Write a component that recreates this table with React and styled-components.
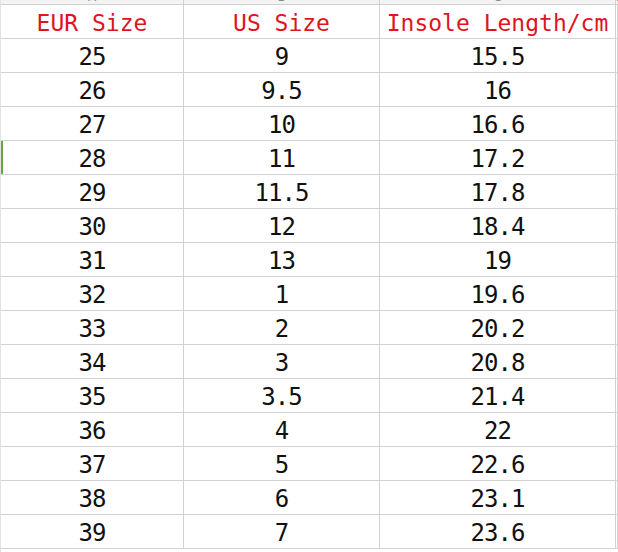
import React from "react";
import styled, { createGlobalStyle } from "styled-components";

const GlobalStyle = createGlobalStyle`
  html, body {
    margin: 0;
    padding: 0;
    background: #fff;
  }
`;

const Sheet = styled.div`
  width: 618px;
  height: 552px;
  overflow: hidden;
  background: #fff;
  border-left: 1px solid #e2e2e2;
  box-sizing: border-box;
`;

const columns = "183px 196px 236px 1fr";

const ColumnHeads = styled.div`
  display: grid;
  grid-template-columns: ${columns};
  height: 4px;
  overflow: hidden;
  background: #f3f3f3;
  border-bottom: 1px solid #cfcfcf;
`;

const ColumnHead = styled.div`
  text-align: center;
  font-family: "DejaVu Sans", sans-serif;
  font-size: 12px;
  line-height: 12px;
  margin-top: -9px;
  color: #8a8a8a;
  border-right: 1px solid #cfcfcf;
`;

const Grid = styled.div`
  display: grid;
  grid-template-columns: ${columns};
  grid-auto-rows: 34px;
`;

const Cell = styled.div`
  box-sizing: border-box;
  border-right: 1px solid #d2d2d2;
  border-bottom: 1px solid #d2d2d2;
  text-align: center;
  white-space: nowrap;
  font-family: "DejaVu Sans Mono", "Liberation Mono", monospace;
  color: ${({ $head }) => ($head ? "#e0141e" : "#111")};
  font-size: ${({ $head }) => ($head ? "23px" : "24px")};
  letter-spacing: ${({ $head }) => ($head ? "0" : "-1px")};
  padding-top: ${({ $head }) => ($head ? "4px" : "3px")};
  line-height: ${({ $head }) => ($head ? "29px" : "30px")};
  box-shadow: ${({ $marked }) => ($marked ? "inset 2px 0 0 #62a83c" : "none")};
`;

const rows = [
  ["25", "9", "15.5"],
  ["26", "9.5", "16"],
  ["27", "10", "16.6"],
  ["28", "11", "17.2"],
  ["29", "11.5", "17.8"],
  ["30", "12", "18.4"],
  ["31", "13", "19"],
  ["32", "1", "19.6"],
  ["33", "2", "20.2"],
  ["34", "3", "20.8"],
  ["35", "3.5", "21.4"],
  ["36", "4", "22"],
  ["37", "5", "22.6"],
  ["38", "6", "23.1"],
  ["39", "7", "23.6"],
];

export default function App() {
  return (
    <>
      <GlobalStyle />
      <Sheet>
        <ColumnHeads>
          <ColumnHead>A</ColumnHead>
          <ColumnHead>B</ColumnHead>
          <ColumnHead>C</ColumnHead>
          <ColumnHead>D</ColumnHead>
        </ColumnHeads>
        <Grid>
          <Cell $head>EUR Size</Cell>
          <Cell $head>US Size</Cell>
          <Cell $head>Insole Length/cm</Cell>
          <Cell />
          {rows.map(([eur, us, cm]) => (
            <React.Fragment key={eur}>
              <Cell $marked={eur === "28"}>{eur}</Cell>
              <Cell>{us}</Cell>
              <Cell>{cm}</Cell>
              <Cell />
            </React.Fragment>
          ))}
        </Grid>
      </Sheet>
    </>
  );
}
